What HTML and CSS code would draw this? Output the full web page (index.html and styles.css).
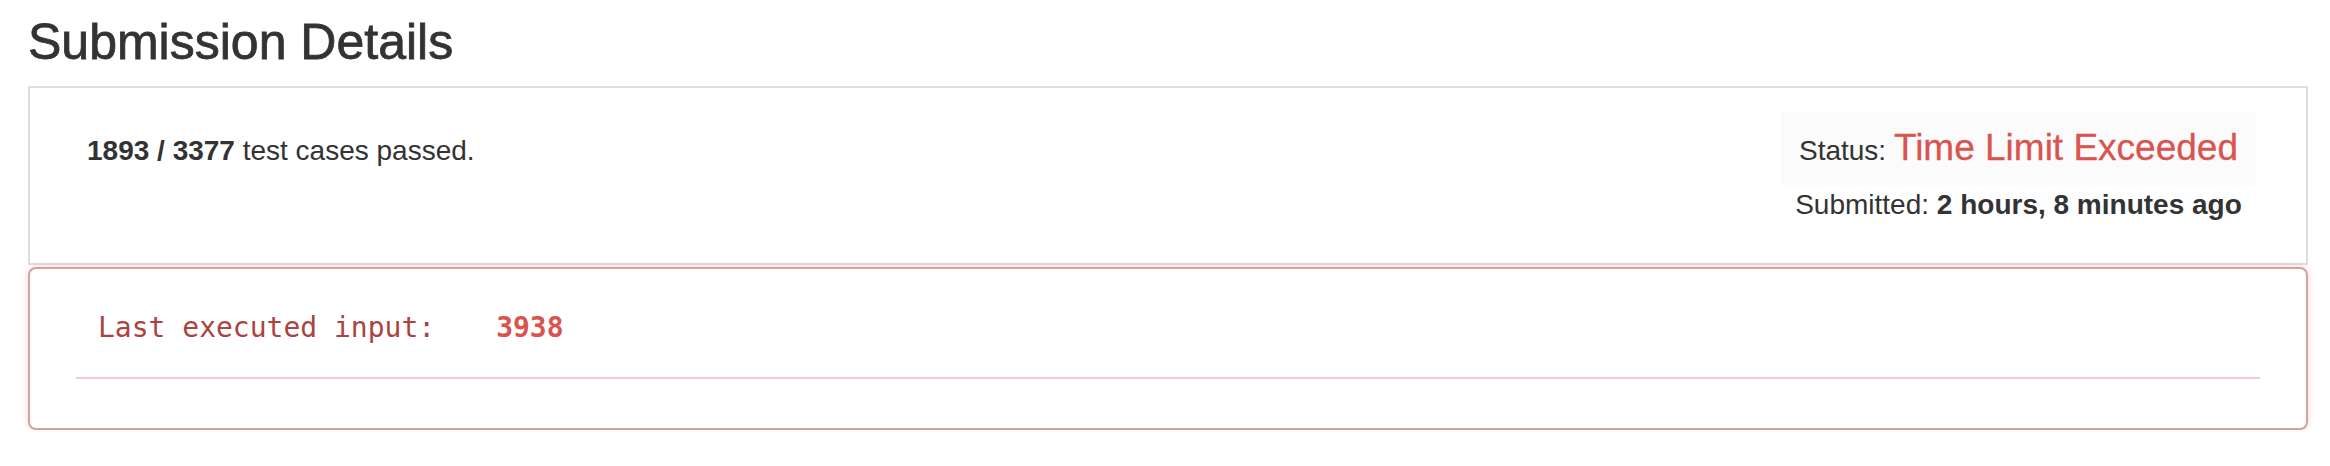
FILE: index.html
```html
<!DOCTYPE html>
<html lang="en">
<head>
<meta charset="utf-8">
<title>Submission Details</title>
<link rel="stylesheet" href="styles.css">
</head>
<body>
<div class="page">
  <h3 class="title">Submission Details</h3>
  <div class="panel summary">
    <div class="summary-left"><strong>1893 / 3377</strong> test cases passed.</div>
    <div class="summary-right">
      <div class="status-box">Status: <span class="status-text">Time Limit Exceeded</span></div>
      <div class="submitted">Submitted: <strong>2 hours, 8 minutes ago</strong></div>
    </div>
  </div>
  <div class="panel error">
    <div class="last-input"><span class="label">Last executed input:</span><span class="value">3938</span></div>
    <div class="divider"></div>
  </div>
</div>
</body>
</html>
```
FILE: styles.css
```css
html, body {
  margin: 0;
  padding: 0;
  background: #fff;
}
body {
  font-family: "Liberation Sans", Arial, Helvetica, sans-serif;
  font-size: 28px;
  line-height: 1.42857;
  color: #333;
}
.page {
  padding: 0 22px 0 28px;
}
.title {
  margin: 0 0 16px 0;
  padding-top: 15px;
  font-size: 50px;
  font-weight: 400;
  line-height: 1.1;
  color: #333;
  -webkit-text-stroke: 0.8px #333;
}
.panel {
  background: #fff;
}
.summary {
  display: flex;
  justify-content: space-between;
  align-items: baseline;
  border: 2px solid #dedede;
  padding: 24px 50px 38px 57px;
}
.summary-left strong,
.submitted strong {
  font-weight: 700;
}
.summary-right {
  display: flex;
  flex-direction: column;
  align-items: center;
}
.status-box {
  background: #fbfbfb;
  padding: 10px 18px;
}
.status-text {
  font-size: 37px;
  color: #d9534f;
  -webkit-text-stroke: 0.3px #d9534f;
}
.submitted {
  line-height: 40px;
}
.error {
  margin-top: 2px;
  border: 2px solid #d6a0a2;
  border-radius: 8px;
  box-shadow: 0 0 6px rgba(217, 83, 79, 0.25);
  padding: 19px 46px 49px 46px;
}
.last-input {
  font-family: "DejaVu Sans Mono", "Liberation Mono", monospace;
  font-size: 28px;
  line-height: 40px;
  padding: 20px 22px 29px 22px;
  white-space: nowrap;
}
.last-input .label {
  color: #a94442;
}
.last-input .value {
  color: #d9534f;
  font-weight: 700;
  margin-left: 61px;
}
.divider {
  height: 2px;
  background: #f2cdcd;
}
```
